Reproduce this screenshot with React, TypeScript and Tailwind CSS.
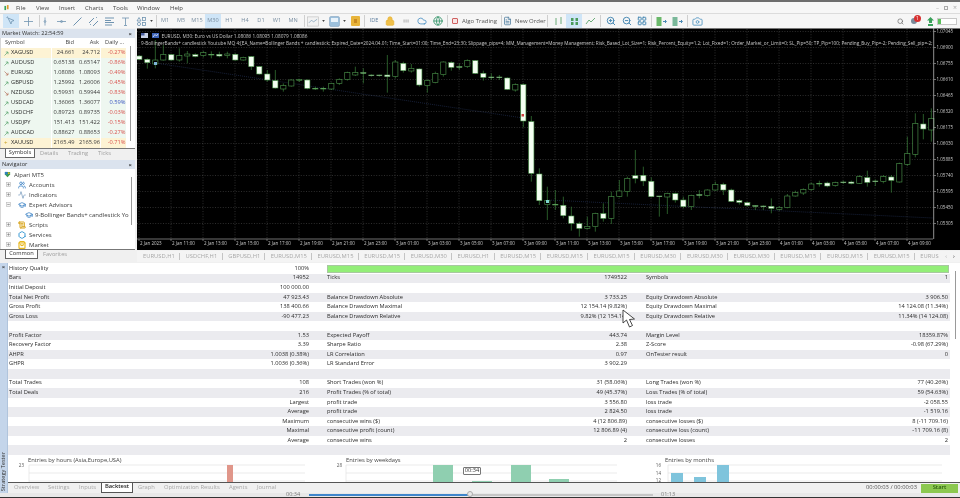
import React from "react";
import { Users, Activity, GraduationCap, ScrollText, Hexagon, ShoppingBag, Search, Lock, Cloud, Globe, Camera, ZoomIn, ZoomOut, LayoutGrid, FileText } from "lucide-react";

const A: [number, number, number, number, number][] = [
[46,48,58,60,1],[55,58,68,86,1],[0,60,72,85,0],[15,44,60,62,0],[42,44,60,62,1],[25,47,60,65,0],[33,42,48,70,0],[40,44,49,52,1],[33,38,47,52,0],[34,43,45,55,1],[35,43,48,52,1],[35,42,47,55,0],[40,43,60,62,1],[50,52,60,62,0],[48,50,80,90,1],[78,80,102,104,1],[90,102,120,125,1],[90,122,144,146,1],[130,137,147,155,0],[118,120,138,140,0],[117,119,122,126,0],[118,120,145,148,1],[140,145,147,150,1],[140,145,147,155,1],[128,130,147,150,0],[115,118,130,135,0],[95,98,118,122,0],[80,98,105,108,0],[85,98,100,130,1],[103,105,107,110,1],[104,105,107,110,1],[45,105,110,158,1],[60,66,110,115,0],[65,70,92,98,1],[72,85,93,98,0],[85,87,135,140,1],[118,122,136,158,0],[95,100,128,130,0],[64,66,104,110,0],[64,68,82,92,1],[70,80,82,90,1],[58,62,80,84,0],[60,62,100,102,1],[92,100,112,122,1],[100,111,113,120,1],[105,111,113,120,1],[112,114,148,150,1],[130,134,150,155,0],[130,134,243,262,1],[228,245,400,425,1],[385,402,482,495,1]];
const B: [number, number, number, number, number][] = [
[440,482,494,540,0],[450,493,495,510,1],[470,496,527,535,1],[500,528,550,572,1],[545,551,565,590,1],[530,559,565,568,0],[518,520,560,575,0],[490,521,535,545,1],[455,470,535,552,0],[420,453,469,472,0],[410,415,455,470,0],[330,407,415,430,1],[380,406,423,438,1],[412,424,470,472,1],[468,468,470,530,1],[458,460,471,522,0],[458,461,480,488,1],[470,480,500,505,1],[464,466,500,510,0],[450,464,466,475,1],[448,450,466,470,0],[425,434,450,452,0],[428,433,450,465,1],[446,450,484,486,1],[478,482,487,494,1],[485,488,496,500,1],[495,497,499,510,1],[496,498,500,510,1],[475,499,505,520,1],[498,502,508,512,0],[462,468,503,505,0],[452,458,468,470,0],[445,449,459,465,0],[428,432,449,452,0],[422,430,432,440,1],[425,429,438,442,1],[425,428,437,440,0],[422,426,428,432,1],[422,426,430,433,1],[405,410,430,432,0],[392,413,427,440,1],[418,423,425,438,1],[405,409,424,430,0],[405,411,421,458,1],[368,371,426,428,0],[290,341,373,378,0],[220,250,343,352,0],[222,252,267,298,1],[205,236,270,305,0]];

const candles = [
  ...A.map((c, i) => ({ x: 136 + (10 + 24 * i) / 3, c })),
  ...B.map((c, i) => ({ x: 548 + (-2 + 24 * i) / 3, c })),
];
const prices = ["1.07045","1.06900","1.06755","1.06610","1.06465","1.06320","1.06175","1.06030","1.05885","1.05740","1.05595","1.05450","1.05305"];
const times = ["2 Jan 2023","2 Jan 11:00","2 Jan 13:00","2 Jan 15:00","2 Jan 17:00","2 Jan 19:00","2 Jan 21:00","2 Jan 23:00","3 Jan 01:00","3 Jan 03:00","3 Jan 05:00","3 Jan 07:00","3 Jan 09:00","3 Jan 11:00","3 Jan 13:00","3 Jan 15:00","3 Jan 17:00","3 Jan 19:00","3 Jan 21:00","3 Jan 23:00","4 Jan 01:00","4 Jan 03:00","4 Jan 05:00","4 Jan 07:00","4 Jan 09:00"];
const header2 = "9-BollingerBands+ candlestick Youtube MQ 4:[EA_Name=Bollinger Bands + candlestick; Expired_Date=2024.04.01; Time_Start=01:00; Time_End=23:30; Slippage_pips=4; MM_Management=Money Management; Risk_Based_Lot_Size=1; Risk_Percent_Equity=1.2; Lot_Fixed=1; Order_Market_or_Limit=0; SL_Pip=50; TP_Pip=100; Pending_Buy_Pip=-2; Pending_Sell_pip=-2; MN_F";

function Chart() {
  return (
    <svg viewBox="137 28 823 222" className="block w-[823px] h-[222px] bg-black">
      <defs><clipPath id="hc"><rect x="137" y="28" width="796" height="30" /></clipPath></defs>
      <rect x="137" y="27.8" width="823" height="1.2" fill="#777" />
      {prices.map((_, i) => <line key={i} x1="137" x2="933" y1={31.5 + 16 * i} y2={31.5 + 16 * i} stroke="#5a5a5a" strokeWidth="0.5" strokeDasharray="1 1.6" />)}
      <line x1="137" x2="933" y1="239" y2="239" stroke="#8a8a8a" strokeWidth="0.8" />
      {times.map((_, i) => <line key={i} x1={139 + 32 * i} x2={139 + 32 * i} y1="29" y2="239" stroke="#5a5a5a" strokeWidth="0.5" strokeDasharray="1 1.6" />)}
      <line x1="155" y1="63" x2="523" y2="118" stroke="#26365e" strokeWidth="0.6" strokeDasharray="1 1" />
      <line x1="547" y1="200" x2="933" y2="218" stroke="#26365e" strokeWidth="0.6" strokeDasharray="1 1" />
      {candles.map(({ x, c }, i) => {
        const [wt, bt, bb, wb, f] = c;
        const y = (v: number) => 40 + v / 3;
        return (
          <g key={i}>
            <line x1={x} x2={x} y1={Math.max(y(wt), 40)} y2={y(wb)} stroke="#3a7f3a" strokeWidth="0.7" />
            <rect x={x - 2.6} y={y(bt)} width="5.2" height={Math.max(y(bb) - y(bt), 0.6)} fill={f ? "#f4fff2" : "#000"} stroke="#4f9a4f" strokeWidth="0.6" />
          </g>
        );
      })}
      <rect x="521.5" y="114" width="2.5" height="2.5" fill="#d04040" />
      <rect x="154" y="62" width="3" height="3" fill="#7fb6d8" />
      <rect x="546" y="200" width="3" height="3" fill="#7fd8d0" />
      <line x1="933.7" x2="933.7" y1="28" y2="239" stroke="#b5b5b5" strokeWidth="0.8" />
      {prices.map((p, i) => (
        <g key={p}>
          <line x1="933.7" x2="936" y1={31.5 + 16 * i} y2={31.5 + 16 * i} stroke="#b5b5b5" strokeWidth="0.6" />
          <text x="936.5" y={33.2 + 16 * i} fontSize="4.5" fill="#c8c8c8">{p}</text>
        </g>
      ))}
      {times.map((t, i) => (
        <g key={t}>
          <line x1={139 + 32 * i} x2={139 + 32 * i} y1="239" y2="241" stroke="#aaa" strokeWidth="0.6" />
          <text x={140 + 32 * i} y="245.4" fontSize="4.5" fill="#c8c8c8">{t}</text>
        </g>
      ))}
      <rect x="141" y="33" width="7" height="5" fill="#c9d2e6" />
      <rect x="141" y="33" width="3.5" height="2.5" fill="#4a5fa0" />
      <rect x="152" y="33" width="7" height="5" fill="#3e64b8" />
      <path d="M153 37 L155 34.5 L156.5 36 L158 34" stroke="#fff" strokeWidth="0.7" fill="none" />
      <text x="161.5" y="37.6" fontSize="4.7" fill="#c8c8c8" textLength="146" lengthAdjust="spacingAndGlyphs">EURUSD, M30:  Euro vs US Dollar  1.08086 1.08095 1.08079 1.08086</text>
      <g clipPath="url(#hc)">
        <text x="141" y="44.8" fontSize="4.7" fill="#c8c8c8" textLength="805" lengthAdjust="spacingAndGlyphs">{header2}</text>
      </g>
    </svg>
  );
}

const mw: [string, string, string, string, number][] = [
  ["XAGUSD","24.661","24.712","-0.27%",2],["AUDUSD","0.65138","0.65147","-0.86%",1],["EURUSD","1.08086","1.08093","-0.49%",0],["GBPUSD","1.25992","1.26006","-0.45%",1],["NZDUSD","0.59931","0.59944","-0.83%",0],["USDCAD","1.36065","1.36077","0.59%",1],["USDCHF","0.89723","0.89735","-0.03%",1],["USDJPY","151.413","151.422","-0.15%",1],["AUDCAD","0.88627","0.88653","-0.27%",1],["XAUUSD","2165.49","2165.96","-0.71%",3]];

function Arrow({ k }: { k: number }) {
  if (k === 3) return <span className="w-[5px] text-[6px] text-[#c9a227] leading-none">+</span>;
  const col = k === 0 ? "#b5705a" : "#5aa36e";
  return (
    <svg viewBox="0 0 5 5" className="w-[5px] h-[5px]">
      {k === 0 ? <path d="M0.5 0.5 L4 4 M4 1.8 V4 H1.8" stroke={col} strokeWidth="0.7" fill="none" /> : <path d="M0.5 4.5 L4 1 M1.8 1 H4 V3.2" stroke={col} strokeWidth="0.7" fill="none" />}
    </svg>
  );
}

function MarketWatch() {
  return (
    <div className="h-[120px] flex flex-col shrink-0">
      <div className="h-[9px] mt-[1px] shrink-0 flex items-center justify-between bg-[#dbe3ee] pl-[2px] pr-[3px] text-[5.6px] text-[#333]">
        <span>Market Watch: 22:54:59</span><span className="text-[6px] font-bold leading-none">×</span>
      </div>
      <div className="flex-1 flex bg-white border-l border-[#d8d8d8] min-h-0">
        <div className="w-[125px] flex flex-col">
          <div className="h-[10px] shrink-0 flex items-center text-[#444]">
            <span className="w-[50px] pl-[4px]">Symbol</span>
            <span className="w-[23px] text-right">Bid</span>
            <span className="w-[25px] text-right">Ask</span>
            <span className="w-[25px] text-right">Daily ...</span>
          </div>
          {mw.map(([s, b, a, d, k]) => {
            const bg = k >= 2 ? "bg-[#fdf3d4]" : "bg-[#eef7f0]";
            return (
              <div key={s} className="h-[10px] shrink-0 flex items-center gap-[0.5px]">
                <span className={`w-[50px] h-full flex items-center gap-[2px] pl-[3px] ${bg}`}><Arrow k={k} /><span className="text-[#2a2a2a]">{s}</span></span>
                <span className={`w-[23px] h-full flex items-center justify-end ${bg} text-[#3a3a3a]`}>{b}</span>
                <span className={`w-[25px] h-full flex items-center justify-end ${bg} text-[#3a3a3a]`}>{a}</span>
                <span className={`w-[25px] h-full flex items-center justify-end ${bg} ${d === "0.59%" ? "text-[#3a55c0]" : "text-[#d9534f]"}`}>{d}</span>
              </div>
            );
          })}
        </div>
        <div className="flex-1 flex justify-center pt-[8px]"><div className="w-[1px] h-[95px] bg-[#9a9a9a] ml-[-1px]" /></div>
      </div>
    </div>
  );
}

function SideTabs({ items, w, widths }: { items: string[]; w: string; widths: string[] }) {
  return (
    <div className="h-[11px] shrink-0 flex items-start border-t border-[#777] bg-[#f0f0f0] text-[#a0a0a0]">
      <div className={`ml-[5px] h-[9px] flex items-center justify-center bg-white border-x border-b border-[#666] text-[#333] ${w}`}>{items[0]}</div>
      <div className="w-[5px]" />
      {items.slice(1).map((t, i) => (
        <div key={t} className={`h-[9px] flex items-center ${widths[i]}`}>{t}</div>
      ))}
    </div>
  );
}

function Plus({ minus }: { minus?: boolean }) {
  return (
    <svg viewBox="0 0 6 6" className="w-[5px] h-[5px] shrink-0">
      <rect x="0.5" y="0.5" width="5" height="5" fill="#f4f4f4" stroke="#b8b8b8" strokeWidth="0.7" />
      <path d={minus ? "M1.5 3h3" : "M1.5 3h3 M3 1.5v3"} stroke="#777" strokeWidth="0.7" />
    </svg>
  );
}

function Navigator() {
  const iconCls = "w-[8px] h-[8px]";
  const rows: [React.ReactNode, string][] = [
    [<Users className={iconCls} color="#3b82c4" strokeWidth={2.4} />, "Accounts"],
    [<Activity className={iconCls} color="#6d93b8" strokeWidth={2} />, "Indicators"],
    [<GraduationCap className={iconCls} color="#3b82c4" strokeWidth={2.4} />, "Expert Advisors"],
    [null, ""],
    [<ScrollText className={iconCls} color="#d8a51e" strokeWidth={3} />, "Scripts"],
    [<Hexagon className={iconCls} color="#3b9ad4" strokeWidth={3} />, "Services"],
    [<ShoppingBag className={iconCls} color="#e8b81e" strokeWidth={3.4} />, "Market"],
  ];
  return (
    <div className="h-[89px] mt-[1px] shrink-0 flex flex-col">
      <div className="h-[9px] shrink-0 flex items-center justify-between bg-[#dbe3ee] pl-[2px] pr-[3px] text-[5.6px] text-[#333]">
        <span>Navigator</span><span className="text-[6px] font-bold leading-none">×</span>
      </div>
      <div className="flex-1 bg-white border-l border-[#d8d8d8] relative overflow-hidden text-[#3a3a3a] text-[6px]">
        <div className="h-[10px] flex items-center gap-[3px] pl-[3px] mt-[0.5px]">
          <svg viewBox="0 0 8 8" className="w-[7px] h-[7px]"><path d="M1 1h6v3L4 7 1 4z" fill="#3a9a50" /><path d="M1 1h3v3H1z" fill="#2f7fc0" /><circle cx="5.5" cy="2.5" r="1" fill="#e8b81e" /></svg>
          <span>Alpari MT5</span>
        </div>
        {rows.map(([ic, t], i) =>
          i === 3 ? (
            <div key={i} className="h-[10px] flex items-center gap-[2px] pl-[24px]">
              <GraduationCap className={iconCls} color="#3b82c4" strokeWidth={2.4} />
              <span className="whitespace-nowrap">9-Bollinger Bands+ candlestick Yo</span>
            </div>
          ) : (
            <div key={t} className="h-[10px] flex items-center gap-[2px] pl-[5px]">
              <Plus minus={i === 2} /><span className="w-[3px]" />{ic}<span className="ml-[1px]">{t}</span>
            </div>
          )
        )}
        <div className="absolute right-[3px] top-[8px] w-[1px] h-[48px] bg-[#9a9a9a]" />
      </div>
    </div>
  );
}

const TI = "stroke-[#6f93b0] fill-none";
function Ti({ w = "w-[16px]", sel, children }: { w?: string; sel?: boolean; children?: React.ReactNode }) {
  return <div className={`h-[14px] shrink-0 flex items-center justify-center ${w} ${sel ? "bg-[#cfe5f7]" : ""}`}>{children}</div>;
}
const Sep = () => <div className="w-[1px] h-[12px] bg-[#cfcfcf] shrink-0" />;
const Dd = () => <Ti w="w-[4px]"><svg viewBox="0 0 4 3" className="w-[3px] h-[2px]"><path d="M0 0h4L2 3z" fill="#444" /></svg></Ti>;
const S = ({ children }: { children: React.ReactNode }) => <svg viewBox="0 0 11 11" className={`w-[11px] h-[11px] ${TI}`} strokeWidth="0.8">{children}</svg>;

function Toolbar() {
  return (
    <div className="h-[15px] shrink-0 flex items-center bg-[#f6f6f6] border-t border-[#dcdcdc] text-[#7a8fa2] text-[5.6px]">
      <div className="w-[3px] shrink-0" />
      <Ti sel><S><path d="M2 2l6 2.5-2.5 1L5 8z M1 1h1 M1 1v1" /></S></Ti><div className="w-[1px] shrink-0" />
      <Ti><S><path d="M5.5 1v9 M1 5.5h9" /></S></Ti><div className="w-[3px] shrink-0" /><Sep />
      <Ti w="w-[10px]"><S><path d="M5.5 1v9" /><circle cx="5.5" cy="5.5" r="1" /></S></Ti><div className="w-[3px] shrink-0" />
      <Ti><S><path d="M1 5.5h9" /><circle cx="5.5" cy="5.5" r="1" /></S></Ti>
      <Ti><S><path d="M1.5 9.5l8-8" strokeWidth="1" /></S></Ti>
      <Ti><S><path d="M1 7l5-5 M5 10l5-5" strokeWidth="1" /><path d="M2 9l1-1 M8 2l1-1" /></S></Ti>
      <Ti><S><path d="M1 2h9 M1 4.5h6 M1 6.5h9 M1 9h7" strokeWidth="1" /></S></Ti>
      <Ti><S><path d="M2 2h7 M5.5 2v7.5 M4 9.5h3" /></S></Ti>
      <Ti><S><path d="M1 5L3 1.5 5 5z" /><rect x="6.5" y="1.5" width="3" height="3" /><circle cx="3" cy="8" r="1.6" /><rect x="6.5" y="6.5" width="3" height="3" /></S></Ti>
      <Dd /><div className="w-[3px] shrink-0" /><Sep />
      {["M1","M5","M15","M30","H1","H4","D1","W1","MN"].map(t => <Ti key={t} sel={t === "M30"}>{t}</Ti>)}
      <div className="w-[3px] shrink-0" /><Sep />
      <Ti><svg viewBox="0 0 13 11" className={`w-[12px] h-[11px] ${TI}`} strokeWidth="0.7"><rect x="0.5" y="0.5" width="12" height="10" fill="#f2f2f2" stroke="#c0c0c0" /><path d="M2 7l3-3 2 2 4-3" /></svg></Ti>
      <Dd /><div className="w-[1px] shrink-0" />
      <Ti><svg viewBox="0 0 11 11" className="w-[11px] h-[11px]"><rect x="0.5" y="0.5" width="10" height="10" rx="1.5" fill="#9cc0dc" stroke="#7a9ab8" strokeWidth="0.5" /><rect x="2" y="2" width="7" height="4" fill="#e8f2fa" /></svg></Ti>
      <Dd /><div className="w-[1px] shrink-0" />
      <Ti><svg viewBox="0 0 9 10" className="w-[9px] h-[10px]"><rect width="9" height="10" rx="1" fill="#e8b43a" /><rect x="3" y="3" width="3" height="4" fill="#c98a20" /></svg></Ti>
      <div className="w-[1px] shrink-0" /><Sep /><div className="w-[1px] shrink-0" />
      <Ti><span className="text-[#5f7f9f]">IDE</span></Ti>
      <Ti><Lock className="w-[10px] h-[10px]" color="#e8b43a" fill="#f0c04a" strokeWidth={2} /></Ti>
      <Ti><span className="text-[#c8c8c8] text-[4px]">▮▮▮</span></Ti>
      <Ti><Cloud className="w-[10px] h-[10px]" color="#4a90c4" strokeWidth={2} /></Ti>
      <Ti><Globe className="w-[10px] h-[10px]" color="#4aa07a" strokeWidth={2.4} /></Ti>
      <div className="w-[1px] shrink-0" /><Sep />
      <div className="w-[53px] flex items-center shrink-0 pl-[4px] gap-[4px] text-[#555] text-[6px]">
        <span className="w-[6px] h-[6px] border border-[#d06060] bg-[#f7e5e5] rounded-[1px]" /><span className="whitespace-nowrap">Algo Trading</span>
      </div>
      <Sep />
      <div className="w-[45px] flex items-center shrink-0 pl-[1px] gap-[3px] text-[#555] text-[6px]">
        <FileText className="w-[9px] h-[10px]" color="#4a7a9c" strokeWidth={2} /><span className="whitespace-nowrap">New Order</span>
      </div>
      <Sep /><div className="w-[2px] shrink-0" />
      <Ti><S><path d="M3 2v7 M8 1v7" stroke="#4a9a5a" /></S></Ti>
      <Ti sel><svg viewBox="0 0 11 11" className="w-[11px] h-[11px]"><rect x="2" y="2" width="2.5" height="3" fill="#4a9a5a" /><rect x="6.5" y="2" width="2.5" height="3" fill="#4a9a5a" /><rect x="2" y="6" width="2.5" height="3" fill="#4a9a5a" /><rect x="6.5" y="6" width="2.5" height="3" fill="#4a9a5a" /></svg></Ti>
      <Ti><S><path d="M1 8l3-4 2 2 4-4" stroke="#4a9a5a" /></S></Ti>
      <div className="w-[2px] shrink-0" /><Sep /><div className="w-[2px] shrink-0" />
      <Ti><ZoomIn className="w-[10px] h-[10px]" color="#4a8ab4" strokeWidth={2.4} /></Ti>
      <Ti><ZoomOut className="w-[10px] h-[10px]" color="#4a8ab4" strokeWidth={2.4} /></Ti>
      <Ti w="w-[14px]"><LayoutGrid className="w-[10px] h-[10px]" color="#4a8ab4" strokeWidth={2.4} /></Ti>
      <div className="w-[2px] shrink-0" /><Sep /><div className="w-[1px] shrink-0" />
      <Ti><svg viewBox="0 0 11 9" className="w-[11px] h-[9px]"><rect x="0.5" width="5" height="9" fill="#6ab86a" /><path d="M7 4.5h3 M9 3l1.5 1.5L9 6" stroke="#4a8ab4" fill="none" /></svg></Ti>
      <Ti><svg viewBox="0 0 11 9" className="w-[11px] h-[9px]"><rect x="0.5" width="5" height="9" fill="#7ab89a" /><path d="M7 4.5h3 M9 3l1.5 1.5L9 6" stroke="#4a8ab4" fill="none" /></svg></Ti>
      <div className="w-[2px] shrink-0" /><Sep /><div className="w-[1px] shrink-0" />
      <Ti><Camera className="w-[11px] h-[11px]" color="#5a9ac4" strokeWidth={2} /></Ti>
      <div className="flex-1" />
      <Search className="w-[7px] h-[7px] mr-[7px]" color="#555" strokeWidth={2} />
      <div className="relative w-[10px] h-[8px] mr-[6px]">
        <span className="absolute left-0 top-[1px] w-[6px] h-[6px] rounded-full bg-[#7a8a9a]" />
        <span className="absolute left-[3px] top-[-2px] w-[7px] h-[7px] rounded-full bg-[#d63030] text-white text-[5px] leading-[7px] text-center">1</span>
      </div>
      <svg viewBox="0 0 7 9" className="w-[7px] h-[9px] mr-[3px]"><path d="M3.5 0L7 3.5H5V6H2V3.5H0z" fill="#3aa05a" /><path d="M1 7h5v2H1z" fill="#3aa05a" /></svg>
      <div className="w-[20px] h-[7px] bg-white border border-[#c8c8c8] mr-[3px]"><div className="w-[3px] h-full bg-[#5ac05a]" /></div>
    </div>
  );
}

const chartTabs = ["EURUSD,H1","USDCHF,H1","GBPUSD,H1","EURUSD,M15","EURUSD,M15","EURUSD,M15","EURUSD,M30","EURUSD,H1","EURUSD,M15","EURUSD,M15","EURUSD,M15","EURUSD,M30","EURUSD,M30","EURUSD,M30","EURUSD,M15","EURUSD,M15","EURUSD,M15"];

type R = [string, string, string, string, string, string];
const report: R[] = [
  ["History Quality","100%","","","",""],
  ["Bars","14952","Ticks","1749522","Symbols","1"],
  ["Initial Deposit","100 000.00","","","",""],
  ["Total Net Profit","47 923.43","Balance Drawdown Absolute","3 733.25","Equity Drawdown Absolute","3 906.50"],
  ["Gross Profit","138 400.66","Balance Drawdown Maximal","12 154.14 (9.82%)","Equity Drawdown Maximal","14 124.08 (11.34%)"],
  ["Gross Loss","-90 477.23","Balance Drawdown Relative","9.82% (12 154.14)","Equity Drawdown Relative","11.34% (14 124.08)"],
  ["","","","","",""],
  ["Profit Factor","1.53","Expected Payoff","443.74","Margin Level","18359.87%"],
  ["Recovery Factor","3.39","Sharpe Ratio","2.38","Z-Score","-0.98 (67.29%)"],
  ["AHPR","1.0038 (0.38%)","LR Correlation","0.97","OnTester result","0"],
  ["GHPR","1.0036 (0.36%)","LR Standard Error","3 902.29","",""],
  ["","","","","",""],
  ["Total Trades","108","Short Trades (won %)","31 (58.06%)","Long Trades (won %)","77 (40.26%)"],
  ["Total Deals","216","Profit Trades (% of total)","49 (45.37%)","Loss Trades (% of total)","59 (54.63%)"],
  ["","Largest","profit trade","3 556.80","loss trade","-2 058.55"],
  ["","Average","profit trade","2 824.50","loss trade","-1 519.16"],
  ["","Maximum","consecutive wins ($)","4 (12 806.89)","consecutive losses ($)","8 (-11 709.16)"],
  ["","Maximal","consecutive profit (count)","12 806.89 (4)","consecutive loss (count)","-11 709.16 (8)"],
  ["","Average","consecutive wins","2","consecutive losses","2"],
  ["","","","","",""],
];

function Report() {
  return (
    <div className="flex flex-col shrink-0 pt-[1px]">
      {report.map((r, i) => (
        <div key={i} className={`h-[9.55px] shrink-0 flex items-center text-[#2a2a2a] ${i % 2 ? "bg-[#ebebef]" : "bg-white"}`}>
          <div className="w-[312px] flex justify-between pl-[1px] pr-[11px]"><span>{r[0]}</span><span>{r[1]}</span></div>
          {i === 0 ? (
            <div className="flex-1 h-[8px] ml-[7px] mr-[1px] bg-[#93ee78] border border-[#a8c8a0]" />
          ) : (
            <>
              <div className="w-[318px] flex justify-between pl-[7px] pr-[11px]"><span>{r[2]}</span><span>{r[3]}</span></div>
              <div className="w-[312px] flex justify-between pl-[8px] pr-[2px]"><span>{r[4]}</span><span>{r[5]}</span></div>
            </>
          )}
        </div>
      ))}
    </div>
  );
}

function MiniChart({ vb, cls, title, tx, labels, gx, bars, col }: { vb: string; cls: string; title: string; tx: number; labels: [string, number, number][]; gx: [number, number]; bars: [number, number, number][]; col: string }) {
  return (
    <svg viewBox={vb} className={cls}>
      <text x={tx} y="462" fontSize="5.8" fill="#444">{title}</text>
      {[465, 473, 481].map(y => <line key={y} x1={gx[0]} x2={gx[1]} y1={y} y2={y} stroke="#dedede" strokeWidth="0.6" />)}
      <line x1={gx[0]} x2={gx[0]} y1="465" y2="482" stroke="#dedede" strokeWidth="0.6" />
      {bars.map(([x, w, y], i) => <rect key={i} x={x} y={y} width={w} height={482 - y} fill={col} />)}
      {labels.map(([t, x, y]) => <text key={t} x={x} y={y} fontSize="4.5" fill="#555" textAnchor="end">{t}</text>)}
    </svg>
  );
}

const menu: [string, string][] = [["File","w-[20px]"],["View","w-[23px]"],["Insert","w-[26px]"],["Charts","w-[28px]"],["Tools","w-[24px]"],["Window","w-[33px]"],["Help","w-[20px]"]];

export default function App() {
  return (
    <div className="w-[960px] h-[498px] overflow-hidden relative flex flex-col bg-[#f0f0f0] font-['Open_Sans',sans-serif] text-[5.7px] leading-none blur-[0.35px]">
      <div className="h-[2px] bg-[#6e6e6e] shrink-0" />
      <div className="h-[11px] shrink-0 flex items-center bg-[#f7f7f7] text-[#444] text-[6px]">
        <div className="w-[16px] pl-[4px] flex">
          <svg viewBox="0 0 6 7" className="w-[5px] h-[6px]"><rect x="0.5" y="1" width="2" height="5" fill="#3aa35a" /><rect x="3.5" y="0" width="2" height="5" fill="#e09a2a" /></svg>
        </div>
        {menu.map(([t, w]) => <span key={t} className={`shrink-0 ${w}`}>{t}</span>)}
        <div className="flex-1" />
        <span className="text-[#aaa] mr-[5px]">–</span>
        <span className="w-[4px] h-[4px] border border-[#aaa] mr-[5px]" />
        <span className="text-[#aaa] mr-[3px] text-[7px]">×</span>
      </div>
      <Toolbar />

      <div className="h-[235px] shrink-0 flex">
        <div className="w-[135px] shrink-0 flex flex-col">
          <MarketWatch />
          <SideTabs items={["Symbols","Details","Trading","Ticks"]} w="w-[30px]" widths={["w-[28px]","w-[30px]","w-[20px]"]} />
          <Navigator />
          <SideTabs items={["Common","Favorites"]} w="w-[33px]" widths={["w-[30px]"]} />
        </div>
        <div className="w-[2px] shrink-0" />
        <div className="flex-1 flex flex-col min-w-0 h-[235px]">
          <Chart />
          <div className="h-[11px] mt-[1px] shrink-0 flex items-center bg-[#f4f4f4] text-[#a8a8a8] text-[5.8px] pl-[6px]">
            {chartTabs.map((t, i) => (
              <div key={i} className={`shrink-0 flex items-center justify-between pr-[5.5px] ${t.includes("M") ? "w-[46.7px]" : "w-[42.6px]"}`}>
                <span className="whitespace-nowrap">{t}</span>
                <span className="w-[1px] h-[7px] bg-[#c4c4c4]" />
              </div>
            ))}
            <span className="shrink-0 w-[19px]">EURUS</span>
            <span className="shrink-0 ml-[6px] text-[#aaa]">‹</span>
            <span className="shrink-0 ml-[6px] text-[#222]">›</span>
          </div>
        </div>
      </div>

      <div className="h-[230px] shrink-0 flex bg-white relative">
        <div className="w-[8px] shrink-0 bg-[#c4d5ea] flex flex-col justify-between items-center pt-[1px] pb-[2px] border-r border-[#b0c4dc]">
          <span className="text-[6px] font-bold text-[#333] leading-none">×</span>
          <span className="[writing-mode:vertical-rl] rotate-180 text-[5.6px] text-[#333] whitespace-nowrap">Strategy Tester</span>
        </div>
        <div className="flex-1 min-w-0 flex flex-col">
          <div className="h-[219px] shrink-0 flex min-h-0">
            <div className="w-[942px] shrink-0 flex flex-col">
              <Report />
              <div className="flex overflow-hidden">
                <MiniChart vb="8 455 312 27" cls="w-[312px] h-[27px] shrink-0" title="Entries by hours (Asia,Europe,USA)" tx={28} labels={[["23", 24, 467]]} gx={[29, 305]} bars={[[227, 6, 465]]} col="#e0968a" />
                <MiniChart vb="320 455 318 27" cls="w-[318px] h-[27px] shrink-0" title="Entries by weekdays" tx={346} labels={[["28", 342, 467]]} gx={[346, 617]} bars={[[433, 20, 465], [472, 20, 481], [511, 20, 465], [549, 20, 479]]} col="#8fcfb0" />
                <MiniChart vb="638 455 312 27" cls="w-[312px] h-[27px] shrink-0" title="Entries by months" tx={665} labels={[["16", 661, 467], ["14", 661, 475], ["12", 661, 481.5]]} gx={[668, 942]} bars={[[671, 12, 473], [694, 12, 477], [717, 12, 465]]} col="#7fc4dc" />
              </div>
            </div>
            <div className="flex-1 flex justify-center pt-[8px]"><div className="w-[1px] h-[68px] bg-[#9a9a9a]" /></div>
          </div>
          <div className="h-[11px] shrink-0 flex items-center border-t border-[#555] bg-[#f0f0f0] text-[#a8a8a8] text-[5.8px]">
            <div className="w-[93px] flex shrink-0 pl-[6px]">
              <span className="w-[34px]">Overview</span><span className="w-[31px]">Settings</span><span>Inputs</span>
            </div>
            <div className="w-[32px] h-[10px] flex items-center justify-center bg-white border-x border-b border-[#555] text-[#222] font-semibold shrink-0 mt-[-1px]">Backtest</div>
            <div className="flex shrink-0 pl-[5px]">
              <span className="w-[26px]">Graph</span><span className="w-[65px]">Optimization Results</span><span className="w-[28px]">Agents</span><span>Journal</span>
            </div>
            <div className="flex-1" />
            <span className="text-[#555] mr-[4px]">00:00:03 / 00:00:03</span>
            <div className="w-[37px] h-[9px] bg-[#8cc850] text-[#2a5a10] flex items-center justify-center font-semibold mr-[2px]">Start</div>
          </div>
        </div>
      </div>

      <div className="h-[5px] shrink-0 flex items-center bg-[#e8e8e8] text-[#777] text-[5.5px] border-b-[1.5px] border-[#333] relative">
        <span className="ml-[286px] w-[23px] shrink-0">00:34</span>
        <div className="w-[161px] h-[2.5px] bg-[#3f86cc] shrink-0" />
        <div className="w-[183px] h-[2.5px] bg-[#c6c6c6] shrink-0" />
        <span className="ml-[8px]">01:13</span>
        <span className="absolute left-[467px] top-[-2px] w-[6px] h-[6px] rounded-full bg-[#e8e8e8] border border-[#aaa]" />
      </div>

      <div className="absolute left-[463px] top-[467px] w-[18px] h-[8px] bg-white border border-[#777] rounded-[1px] text-[#333] text-[5.6px] flex items-center justify-center">00:34</div>

      <svg viewBox="0 0 14 20" className="absolute left-[622px] top-[309px] w-[14px] h-[20px]">
        <path d="M1 1 L1 14 L4.5 11 L7.5 18 L10.5 16.5 L7.5 10.5 L12.5 10 Z" fill="#fff" stroke="#333" strokeWidth="0.9" strokeLinejoin="round" />
      </svg>
    </div>
  );
}
